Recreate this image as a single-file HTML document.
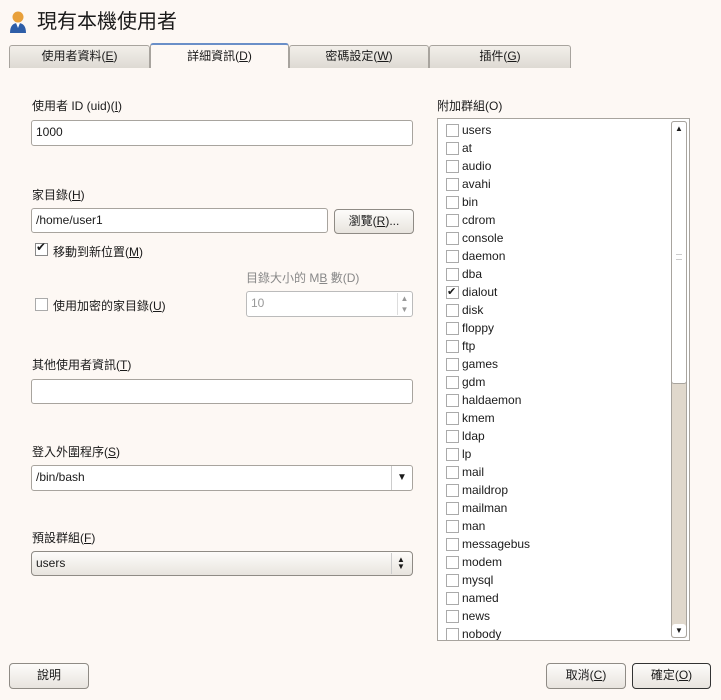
<!DOCTYPE html>
<html><head><meta charset="utf-8"><style>
*{box-sizing:border-box;margin:0;padding:0}
body{width:721px;height:700px;background:#fdf8f4;position:relative;overflow:hidden;font-family:"Liberation Sans","Noto Sans CJK TC",sans-serif;font-size:12px;color:#1a1a1a}
.a{position:absolute}
.tab{position:absolute;top:45px;height:23px;border:1px solid #a8a49e;border-bottom:none;background:linear-gradient(#f2efea,#dedad3);text-align:center;line-height:21px;border-radius:3px 3px 0 0}
.entry{position:absolute;background:#fff;border:1px solid #a8a49e;border-radius:3px;padding-left:4px;line-height:23px}
.btn{position:absolute;border:1px solid #8f8b85;border-radius:4px;background:linear-gradient(#fdfcfa,#e8e4de);text-align:center;line-height:23px}
.cb{position:absolute;width:13px;height:13px;border:1px solid #aaa;background:#fff}
.item{position:absolute;left:8px;height:18px;line-height:18px}
.item .cb{left:0;top:3px}
.item span{position:absolute;left:16px;top:0}
u{text-decoration:underline}
</style></head><body>
<svg class="a" style="left:9px;top:10px" width="18" height="24" viewBox="0 0 18 24"><circle cx="9" cy="7" r="5.5" fill="#e8a03a"/><path d="M1 23 Q1 13 9 13 Q17 13 17 23Z" fill="#2e5ea8"/><path d="M7 13 L9 18 L11 13Z" fill="#fff"/></svg>
<div class="a" style="left:37px;top:8px;font-size:20px;line-height:28px">現有本機使用者</div>
<div class="a" style="left:9px;top:67px;width:562px;height:1px;background:#a8a49e"></div>
<div class="tab" style="left:9px;width:141px">使用者資料(<u>E</u>)</div>
<div class="tab" style="left:150px;width:139px;top:43px;height:25px;background:#fdf8f4;border-top:2px solid #6a8fc8;line-height:23px">詳細資訊(<u>D</u>)</div>
<div class="tab" style="left:289px;width:140px">密碼設定(<u>W</u>)</div>
<div class="tab" style="left:429px;width:142px">插件(<u>G</u>)</div>

<div class="a" style="left:32px;top:97px">使用者 ID (uid)(<u>I</u>)</div>
<div class="entry" style="left:31px;top:120px;width:382px;height:26px">1000</div>
<div class="a" style="left:32px;top:186px">家目錄(<u>H</u>)</div>
<div class="entry" style="left:31px;top:208px;width:297px;height:25px">/home/user1</div>
<div class="btn" style="left:334px;top:209px;width:80px;height:25px">瀏覽(<u>R</u>)...</div>
<div class="cb" style="left:35px;top:243px;border-color:#888"></div><div class="a" style="left:36px;top:240px;font-size:12px">✔</div>
<div class="a" style="left:53px;top:243px">移動到新位置(<u>M</u>)</div>
<div class="a" style="left:246px;top:269px;color:#888">目錄大小的 M<u>B</u> 數(D)</div>
<div class="entry" style="left:246px;top:291px;width:167px;height:26px;color:#999;border-color:#bbb">10</div>
<div class="a" style="left:397px;top:293px;width:14px;height:22px;border-left:1px solid #ddd;color:#999;font-size:8px;text-align:center;line-height:11px">▲<br>▼</div>
<div class="cb" style="left:35px;top:298px"></div>
<div class="a" style="left:53px;top:297px">使用加密的家目錄(<u>U</u>)</div>
<div class="a" style="left:32px;top:356px">其他使用者資訊(<u>T</u>)</div>
<div class="entry" style="left:31px;top:379px;width:382px;height:25px"></div>
<div class="a" style="left:32px;top:443px">登入外圍程序(<u>S</u>)</div>
<div class="entry" style="left:31px;top:465px;width:382px;height:26px">/bin/bash</div>
<div class="a" style="left:391px;top:466px;width:21px;height:24px;border-left:1px solid #ccc;text-align:center;line-height:24px;font-size:10px">▼</div>
<div class="a" style="left:32px;top:529px">預設群組(<u>F</u>)</div>
<div class="btn" style="left:31px;top:551px;width:382px;height:25px;text-align:left;padding-left:4px">users</div>
<div class="a" style="left:391px;top:553px;width:1px;height:21px;background:#ccc"></div>
<div class="a" style="left:397px;top:556px;font-size:8px;line-height:7px">▲<br>▼</div>

<div class="a" style="left:437px;top:97px">附加群組(O)</div>
<div class="a" style="left:437px;top:118px;width:253px;height:523px;background:#fff;border:1px solid #a8a49e;overflow:hidden">
<div class="item" style="top:2px"><div class="cb"></div><span>users</span></div>
<div class="item" style="top:20px"><div class="cb"></div><span>at</span></div>
<div class="item" style="top:38px"><div class="cb"></div><span>audio</span></div>
<div class="item" style="top:56px"><div class="cb"></div><span>avahi</span></div>
<div class="item" style="top:74px"><div class="cb"></div><span>bin</span></div>
<div class="item" style="top:92px"><div class="cb"></div><span>cdrom</span></div>
<div class="item" style="top:110px"><div class="cb"></div><span>console</span></div>
<div class="item" style="top:128px"><div class="cb"></div><span>daemon</span></div>
<div class="item" style="top:146px"><div class="cb"></div><span>dba</span></div>
<div class="item" style="top:164px"><div class="cb" style="font-size:11px;line-height:11px">✔</div><span>dialout</span></div>
<div class="item" style="top:182px"><div class="cb"></div><span>disk</span></div>
<div class="item" style="top:200px"><div class="cb"></div><span>floppy</span></div>
<div class="item" style="top:218px"><div class="cb"></div><span>ftp</span></div>
<div class="item" style="top:236px"><div class="cb"></div><span>games</span></div>
<div class="item" style="top:254px"><div class="cb"></div><span>gdm</span></div>
<div class="item" style="top:272px"><div class="cb"></div><span>haldaemon</span></div>
<div class="item" style="top:290px"><div class="cb"></div><span>kmem</span></div>
<div class="item" style="top:308px"><div class="cb"></div><span>ldap</span></div>
<div class="item" style="top:326px"><div class="cb"></div><span>lp</span></div>
<div class="item" style="top:344px"><div class="cb"></div><span>mail</span></div>
<div class="item" style="top:362px"><div class="cb"></div><span>maildrop</span></div>
<div class="item" style="top:380px"><div class="cb"></div><span>mailman</span></div>
<div class="item" style="top:398px"><div class="cb"></div><span>man</span></div>
<div class="item" style="top:416px"><div class="cb"></div><span>messagebus</span></div>
<div class="item" style="top:434px"><div class="cb"></div><span>modem</span></div>
<div class="item" style="top:452px"><div class="cb"></div><span>mysql</span></div>
<div class="item" style="top:470px"><div class="cb"></div><span>named</span></div>
<div class="item" style="top:488px"><div class="cb"></div><span>news</span></div>
<div class="item" style="top:506px"><div class="cb"></div><span>nobody</span></div>
<div class="a" style="left:233px;top:2px;width:16px;height:517px;background:#e0d8cc;border:1px solid #a8a49e;border-radius:3px"></div>
<div class="a" style="left:233px;top:2px;width:16px;height:263px;background:#fff;border:1px solid #a8a49e;border-radius:3px"></div>
<div class="a" style="left:234px;top:3px;width:14px;height:13px;font-size:8px;text-align:center;line-height:13px">▲</div>
<div class="a" style="left:238px;top:135px;width:6px;height:6px;border-top:1px solid #ccc;border-bottom:1px solid #ccc"></div>
<div class="a" style="left:234px;top:505px;width:14px;height:13px;font-size:8px;text-align:center;line-height:13px;background:#fff;border-radius:3px">▼</div>
</div>

<div class="btn" style="left:9px;top:663px;width:80px;height:26px">說明</div>
<div class="btn" style="left:546px;top:663px;width:80px;height:26px">取消(<u>C</u>)</div>
<div class="btn" style="left:632px;top:663px;width:79px;height:26px;border:1px solid #333">確定(<u>O</u>)</div>
</body></html>
